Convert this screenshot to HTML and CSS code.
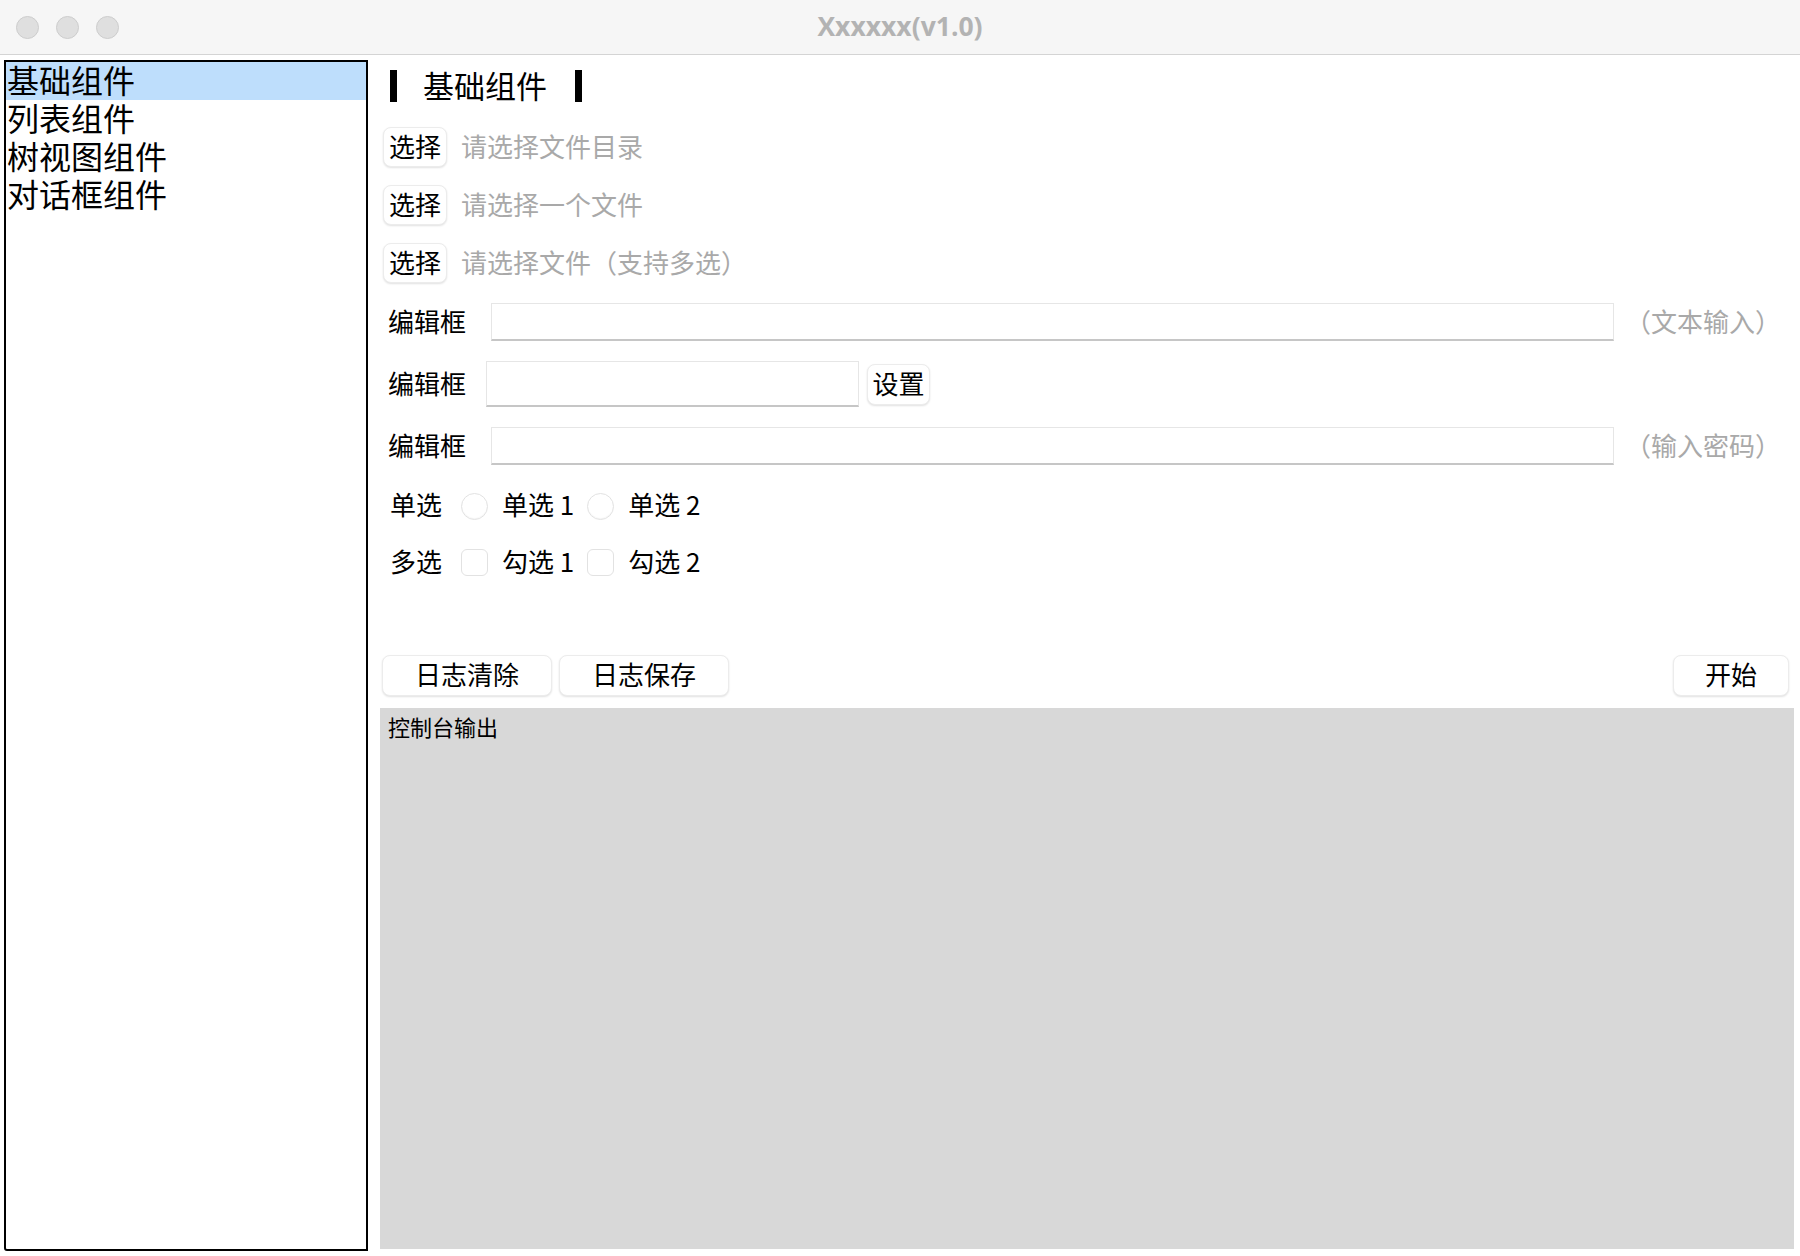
FILE: index.html
```html
<!DOCTYPE html>
<html lang="zh">
<head>
<meta charset="utf-8">
<title>Xxxxxx(v1.0)</title>
<link rel="stylesheet" href="styles.css">
</head>
<body>
<div class="window">
  <div class="titlebar">
    <div class="lights">
      <span class="light"></span>
      <span class="light"></span>
      <span class="light"></span>
    </div>
    <div class="title">Xxxxxx(v1.0)</div>
  </div>
  <div class="content">
    <div class="sidebar">
      <div class="nav-item selected">基础组件</div>
      <div class="nav-item">列表组件</div>
      <div class="nav-item">树视图组件</div>
      <div class="nav-item">对话框组件</div>
    </div>
    <div class="main">
      <div class="heading">
        <span class="bar"></span>
        <span class="heading-text">基础组件</span>
        <span class="bar"></span>
      </div>
      <div class="row select-row">
        <button class="btn btn-small">选择</button>
        <span class="placeholder">请选择文件目录</span>
      </div>
      <div class="row select-row">
        <button class="btn btn-small">选择</button>
        <span class="placeholder">请选择一个文件</span>
      </div>
      <div class="row select-row">
        <button class="btn btn-small">选择</button>
        <span class="placeholder">请选择文件（支持多选）</span>
      </div>
      <div class="row edit-row">
        <span class="label">编辑框</span>
        <div class="input input-wide"></div>
        <span class="hint">（文本输入）</span>
      </div>
      <div class="row edit-row edit-row-mid">
        <span class="label label-tight">编辑框</span>
        <div class="input input-short"></div>
        <button class="btn btn-set">设置</button>
      </div>
      <div class="row edit-row">
        <span class="label">编辑框</span>
        <div class="input input-wide"></div>
        <span class="hint">（输入密码）</span>
      </div>
      <div class="row choice-row">
        <span class="choice-label">单选</span>
        <span class="radio"></span>
        <span class="choice-text">单选 1</span>
        <span class="radio"></span>
        <span class="choice-text">单选 2</span>
      </div>
      <div class="row choice-row check-row">
        <span class="choice-label">多选</span>
        <span class="check"></span>
        <span class="choice-text">勾选 1</span>
        <span class="check"></span>
        <span class="choice-text">勾选 2</span>
      </div>
      <div class="actions">
        <button class="btn btn-action">日志清除</button>
        <button class="btn btn-action">日志保存</button>
        <span class="spacer"></span>
        <button class="btn btn-start">开始</button>
      </div>
      <div class="console">控制台输出</div>
    </div>
  </div>
</div>
</body>
</html>
```

FILE: styles.css
```css
html, body {
  margin: 0;
  padding: 0;
  background: #ffffff;
}
body {
  width: 1800px;
  height: 1256px;
  overflow: hidden;
  font-family: "Noto Sans CJK SC", "Noto Sans", sans-serif;
  color: #000;
}
.window {
  width: 1800px;
  height: 1256px;
  display: flex;
  flex-direction: column;
}
.titlebar {
  height: 54px;
  flex: none;
  background: #f6f6f6;
  border-bottom: 1px solid #d4d4d4;
  position: relative;
  display: flex;
  align-items: center;
  justify-content: center;
}
.lights {
  position: absolute;
  left: 16px;
  top: 16px;
  display: flex;
  gap: 17px;
}
.light {
  width: 21px;
  height: 21px;
  border-radius: 50%;
  background: #dfdfdf;
  border: 1px solid #cdcdcd;
}
.title {
  font-family: "Open Sans", "Liberation Sans", sans-serif;
  font-weight: 700;
  font-size: 26.5px;
  color: #b3b3b3;
  padding-bottom: 2px;
}
.content {
  flex: 1;
  display: flex;
  padding: 5px 6px 5px 4px;
  gap: 12px;
  min-height: 0;
}
.sidebar {
  width: 360px;
  flex: none;
  border: 2px solid #000;
  border-radius: 0 0 0 3px;
  background: #fff;
  display: flex;
  flex-direction: column;
}
.nav-item {
  height: 38px;
  box-sizing: border-box;
  display: flex;
  align-items: center;
  line-height: 32px;
  padding-bottom: 5px;
  font-size: 32px;
  padding-left: 1px;
  white-space: nowrap;
}
.nav-item.selected {
  background: #bedefc;
}
.main {
  flex: 1;
  display: flex;
  flex-direction: column;
  min-width: 0;
}
.heading {
  height: 58px;
  flex: none;
  display: flex;
  align-items: center;
  padding-left: 10px;
  padding-bottom: 6px;
  box-sizing: border-box;
}
.bar {
  width: 7px;
  height: 32px;
  background: #000;
}
.heading-text {
  font-size: 31px;
  line-height: 32px;
  padding-bottom: 3px;
  margin: 0 28px 0 26px;
}
.row {
  display: flex;
  align-items: center;
  flex: none;
}
.select-row {
  height: 58px;
  padding-left: 3px;
}
.btn {
  font-family: "Noto Sans CJK SC", "Noto Sans", sans-serif;
  background: #fff;
  border: 1px solid #ececec;
  border-radius: 8px;
  box-shadow: 0 1px 2px rgba(0, 0, 0, 0.12);
  color: #000;
  padding: 0 0 4px 0;
  margin: 0;
  box-sizing: border-box;
  display: flex;
  align-items: center;
  justify-content: center;
}
.btn-small {
  width: 64px;
  height: 40px;
  font-size: 26px;
}
.placeholder {
  margin-left: 14px;
  font-size: 26px;
  color: #a9a9a9;
  padding-bottom: 4px;
}
.edit-row {
  height: 60px;
  padding-left: 8px;
}
.edit-row-mid {
  height: 64px;
}
.label {
  font-size: 26px;
  width: 103px;
  flex: none;
  padding-bottom: 4px;
}
.label-tight {
  width: 98px;
}
.input {
  height: 38px;
  box-sizing: border-box;
  border: 1px solid #e6e6e6;
  border-bottom: 2px solid #c6c6c6;
  background: #fff;
}
.input-wide {
  width: 1123px;
  flex: none;
}
.input-short {
  width: 373px;
  height: 46px;
  flex: none;
}
.hint {
  margin-left: 11px;
  font-size: 26px;
  color: #a9a9a9;
  white-space: nowrap;
  padding-bottom: 4px;
}
.btn-set {
  width: 63px;
  height: 41px;
  font-size: 26px;
  margin-left: 8px;
}
.choice-row {
  height: 58px;
  padding-left: 10px;
}
.check-row {
  height: 56px;
}
.choice-label {
  font-size: 26px;
  width: 71px;
  flex: none;
  padding-bottom: 4px;
}
.choice-text {
  font-size: 26px;
  margin-left: 14px;
  margin-right: 13px;
  white-space: nowrap;
  padding-bottom: 4px;
}
.radio {
  width: 27px;
  height: 27px;
  box-sizing: border-box;
  border: 1px solid #e2e2e2;
  border-radius: 50%;
  background: #fff;
  box-shadow: inset 0 -1px 1px rgba(0, 0, 0, 0.04);
  margin-top: 2px;
}
.check {
  width: 27px;
  height: 27px;
  box-sizing: border-box;
  border: 1px solid #e2e2e2;
  border-radius: 6px;
  background: #fff;
  margin-top: 0;
}
.actions {
  display: flex;
  align-items: center;
  gap: 7px;
  margin-top: 65px;
  height: 41px;
  flex: none;
  padding: 0 5px 0 2px;
}
.btn-action {
  width: 170px;
  height: 41px;
  font-size: 26px;
}
.spacer {
  flex: 1;
}
.btn-start {
  width: 116px;
  height: 41px;
  font-size: 26px;
}
.console {
  flex: 1;
  margin-top: 12px;
  margin-bottom: 2px;
  background: #d8d8d8;
  padding: 3px 8px;
  font-size: 22px;
  line-height: 30px;
}
```
